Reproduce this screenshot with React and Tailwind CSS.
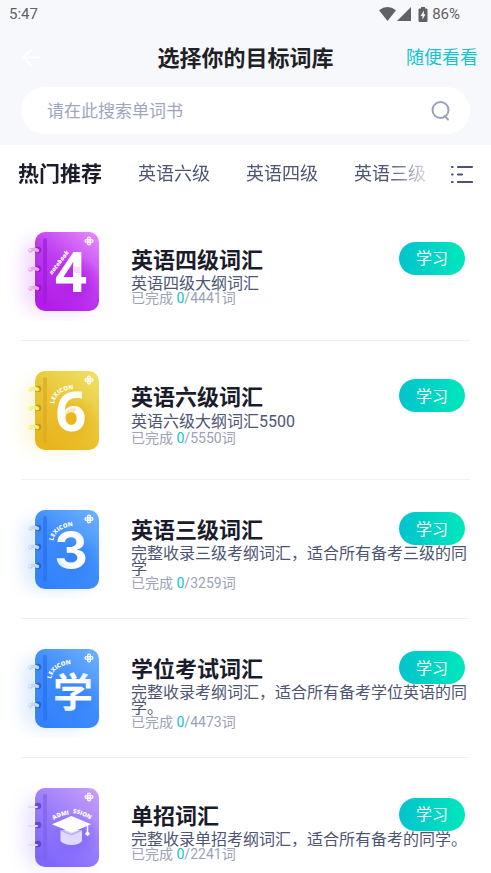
import React from "react";

const TABS = ["热门推荐", "英语六级", "英语四级", "英语三级"];

const BOOKS = [
  {
    id: "cet4",
    title: "英语四级词汇",
    desc: "英语四级大纲词汇",
    total: 4441,
    cover: { from: "#e88ffd", mid: "#bd3bee", to: "#b31be8", spine: "#9c1ddb", ring: "#eda6f8", hole: "#8f14c9", glow: "#c04cf5" },
  },
  {
    id: "cet6",
    title: "英语六级词汇",
    desc: "英语六级大纲词汇5500",
    total: 5550,
    mixed: true,
    cover: { from: "#f0e26a", mid: "#e9c637", to: "#e9b41c", spine: "#dcab22", ring: "#f6f07e", hole: "#b98a14", glow: "#f0d850" },
  },
  {
    id: "level3",
    title: "英语三级词汇",
    desc: "完整收录三级考纲词汇，适合所有备考三级的同学",
    total: 3259,
    cover: { from: "#6fb2fd", mid: "#3f8dfb", to: "#3482fb", spine: "#2a6ff0", ring: "#c0d9fa", hole: "#1c57c4", glow: "#5a9bff" },
  },
  {
    id: "degree",
    title: "学位考试词汇",
    desc: "完整收录考纲词汇，适合所有备考学位英语的同学。",
    total: 4473,
    cover: { from: "#6fb2fd", mid: "#3f8dfb", to: "#3482fb", spine: "#2a6ff0", ring: "#c0d9fa", hole: "#1c57c4", glow: "#5a9bff" },
  },
  {
    id: "admission",
    title: "单招词汇",
    desc: "完整收录单招考纲词汇，适合所有备考的同学。",
    total: 2241,
    thinRings: true,
    cover: { from: "#c9a0fb", mid: "#9a7dfc", to: "#7f66fb", spine: "#7d62ee", ring: "#e4daff", hole: "#5038b8", glow: "#a384ff" },
  },
];

function CoverArt({ id }) {
  const fill = `url(#${id}-glyph)`;
  if (id === "cet4") {
    return (
      <>
        <path id="cet4-line" d="M44 54L64 28" fill="none" />
        <text className="font-['Open_Sans'] text-[6px] font-extrabold italic" fill="#fff">
          <textPath href="#cet4-line">notebook</textPath>
        </text>
        <text x="63" y="71" textAnchor="middle" className="font-['Open_Sans'] text-[56px] font-bold" fill="#fff">4</text>
        <path d="M66 46h6v6h-6z" fill="#b31be8" opacity=".15" />
      </>
    );
  }
  if (id === "cet6") {
    return (
      <>
        <path id="cet6-arc" d="M46 44Q48 30 67 29" fill="none" />
        <text className="font-['Open_Sans'] text-[6px] font-extrabold" fill="#fff">
          <textPath href="#cet6-arc">LEXICON</textPath>
        </text>
        <text x="63" y="71" textAnchor="middle" className="font-['Open_Sans'] text-[54px] font-bold" fill="#fff">6</text>
        <path d="M57 53Q62 46 69 49L66 53Q60 52 58 60z" fill="#e9b41c" opacity=".3" />
      </>
    );
  }
  if (id === "level3") {
    return (
      <>
        <path id="level3-arc" d="M45 42Q48 28 67 27" fill="none" />
        <text className="font-['Open_Sans'] text-[6px] font-extrabold" fill="#fff">
          <textPath href="#level3-arc">LEXICON</textPath>
        </text>
        <text x="63" y="70" textAnchor="middle" className="font-['Inter'] text-[52px] font-bold" fill={fill}>3</text>
      </>
    );
  }
  if (id === "degree") {
    return (
      <>
        <path id="degree-arc" d="M43 41Q46 27 65 26" fill="none" />
        <text className="font-['Open_Sans'] text-[6px] font-extrabold" fill="#fff">
          <textPath href="#degree-arc">LEXICON</textPath>
        </text>
        <text x="65" y="69" textAnchor="middle" className="font-['Noto_Sans_CJK_SC'] text-[40px] font-bold" fill={fill}>学</text>
      </>
    );
  }
  return (
    <>
      <path id="admission-left" d="M46 43Q52 38 66 37" fill="none" />
      <path id="admission-right" d="M65 36Q74 37 86 45" fill="none" />
      <text className="font-['Open_Sans'] text-[6px] font-extrabold" fill="#fff">
        <textPath href="#admission-left">ADMI</textPath>
      </text>
      <text className="font-['Open_Sans'] text-[6px] font-extrabold" fill="#fff">
        <textPath href="#admission-right">SSION</textPath>
      </text>
      <path d="M52.500 53V64Q56 68 63.500 68Q71 68 74 64V53z" fill="#fff" opacity=".75" />
      <path d="M52.500 52L63.500 57L74 52V54L63.500 58.500L52.500 54z" fill="#7f66fb" opacity=".4" />
      <path d="M44 47.300L63.500 39L83 47.300L63.500 55.500z" fill="#fff" />
      <path d="M79.500 48.500V54.500" stroke="#fff" strokeWidth="1.500" />
      <path d="M79.500 53.500L82 57L79.500 59L77 57z" fill="#fff" />
    </>
  );
}

function BookCover({ id, cover, thinRings }) {
  return (
    <svg width="100" height="100" viewBox="0 0 100 100" aria-hidden="true" className="-ml-[13px] shrink-0">
      <defs>
        <linearGradient id={`${id}-cover`} x1="1" y1="0" x2=".3" y2="1">
          <stop offset="0" stopColor={cover.from} />
          <stop offset=".55" stopColor={cover.mid} />
          <stop offset="1" stopColor={cover.to} />
        </linearGradient>
        <linearGradient id={`${id}-glyph`} x1="1" y1="0" x2=".2" y2="1">
          <stop offset="0" stopColor="#fff" stopOpacity=".55" />
          <stop offset=".35" stopColor="#fff" />
          <stop offset=".7" stopColor="#fff" />
          <stop offset="1" stopColor="#fff" stopOpacity=".65" />
        </linearGradient>
        <radialGradient id={`${id}-shade`}>
          <stop offset="0" stopColor={cover.to} />
          <stop offset="1" stopColor={cover.to} stopOpacity="0" />
        </radialGradient>
        <filter id={`${id}-blur`} x="-50%" y="-50%" width="200%" height="200%">
          <feGaussianBlur stdDeviation="9" />
        </filter>
      </defs>
      <rect x="16" y="20" width="66" height="70" rx="14" fill={cover.glow} opacity=".22" filter={`url(#${id}-blur)`} />
      <rect x="26" y="12" width="64" height="77" rx="10" fill="#fff" opacity=".7" />
      <rect x="27" y="11" width="64" height="79" rx="10" fill={`url(#${id}-cover)`} />
      <circle cx="66" cy="60" r="26" fill={`url(#${id}-shade)`} />
      <rect x="35" y="17" width="4" height="66" rx="2" fill={cover.spine} opacity=".7" />
      {[29, 48, 67].map((y) => (
        <g key={y}>
          <circle cx="30" cy={y} r="3.300" fill={cover.hole} opacity=".7" />
          {thinRings ? (
            <path d={`M21 ${y + 1}H29`} stroke={cover.ring} strokeWidth="1.800" strokeLinecap="round" />
          ) : (
            <>
              <path d={`M22.500 ${y + 0.5}Q26 ${y - 2} 29.500 ${y + 0.5}`} stroke={cover.ring} strokeWidth="3.400" strokeLinecap="round" fill="none" />
              <circle cx="22.500" cy={y + 0.5} r="2.300" fill={cover.ring} />
              <circle cx="22" cy={y} r="1.200" fill="#fff" opacity=".5" />
            </>
          )}
        </g>
      ))}
      <g fill="none" stroke="#fff" strokeWidth="1.300">
        <circle cx="81" cy="17.600" r="1.400" />
        <circle cx="81" cy="22.400" r="1.400" />
        <circle cx="78.500" cy="20" r="1.400" />
        <circle cx="83.500" cy="20" r="1.400" />
      </g>
      <CoverArt id={id} />
    </svg>
  );
}

function StatusBar() {
  return (
    <div className="flex h-7 items-center justify-between pr-[31px] pl-[9px] text-[#5f6164]">
      <span className="text-[15px] leading-5">5:47</span>
      <div className="flex items-center">
        <svg width="17" height="14" viewBox="0 0 17 14" fill="currentColor" aria-hidden="true">
          <path d="M0 3.300Q8.500-3.300 17 3.300L8.500 14z" />
        </svg>
        <svg width="14" height="14" viewBox="0 0 14 14" fill="currentColor" className="ml-px" aria-hidden="true">
          <path d="M14 0V14H0z" />
        </svg>
        <svg width="10" height="15" viewBox="0 0 10 15" className="ml-[7px]" aria-hidden="true">
          <path d="M3 0h4v1.500h1.500q1 0 1 1V14q0 1-1 1h-7q-1 0-1-1V2.500q0-1 1-1H3z" fill="currentColor" />
          <path d="M5.800 3.500L2.500 9h2v3.500L7.500 7.300H5.800z" fill="#fff" />
        </svg>
        <span className="ml-1 text-[15px] leading-5">86%</span>
      </div>
    </div>
  );
}

function BookRow({ book }) {
  return (
    <li className="flex h-[139px] items-center gap-[23px] border-b border-[#f1f1f3]">
      <BookCover id={book.id} cover={book.cover} thinRings={book.thinRings} />
      <div className="min-w-0 flex-1 pt-2">
        <div className="flex h-[31px] items-end justify-between pr-[5px]">
          <h2 className="text-[22px] leading-[31px] font-bold text-[#1b1c2b]">{book.title}</h2>
          <button type="button" className="mb-px h-[33px] w-[66px] shrink-0 rounded-full bg-linear-to-r from-[#04c3cd] to-[#00e7bb] pt-0.5 text-base leading-5 text-white">
            学习
          </button>
        </div>
        <p className={`text-base text-[#4d5574] ${book.mixed ? "leading-[18px]" : "leading-[15px]"}`}>{book.desc}</p>
        <p className="text-sm leading-[15px] text-[#9ca2b9]">
          已完成 <span className="text-[#0fc4cc]">0</span>/{book.total}词
        </p>
      </div>
    </li>
  );
}

export default function App() {
  return (
    <div className="flex h-screen flex-col overflow-hidden bg-white font-['Roboto','Noto_Sans_CJK_SC',sans-serif]">
      <header className="shrink-0 bg-[#f7f8fc] pb-[11px]">
        <StatusBar />
        <div className="grid h-[59px] grid-cols-[1fr_auto_1fr] items-center">
          <div className="flex pl-[21px]">
            <button type="button" aria-label="返回" className="text-white">
              <svg width="20" height="20" viewBox="0 0 20 20" fill="none" stroke="currentColor" strokeWidth="2.200" strokeLinecap="round" strokeLinejoin="round" aria-hidden="true">
                <path d="M18 9.500H2M10 2L2 9.500L10 17" />
              </svg>
            </button>
          </div>
          <h1 className="pt-0.5 text-[22px] leading-8 font-bold text-[#202124]">选择你的目标词库</h1>
          <div className="flex justify-end pr-[13px]">
            <a href="#browse" className="text-lg leading-7 text-[#14c4ce]">随便看看</a>
          </div>
        </div>
        <form className="mx-[21px] flex h-[47px] items-center rounded-full bg-white pr-[19px] pl-[26px]">
          <input
            type="search"
            aria-label="搜索单词书"
            placeholder="请在此搜索单词书"
            className="h-full min-w-0 flex-1 bg-transparent text-[17px] text-[#4d5574] outline-none placeholder:text-[#9ea5c0]"
          />
          <button type="submit" aria-label="搜索" className="text-[#9aa1bd]">
            <svg width="20" height="22" viewBox="0 0 20 22" fill="none" stroke="currentColor" strokeWidth="2" strokeLinecap="round" aria-hidden="true">
              <circle cx="9.500" cy="10" r="8" />
              <path d="M13.500 16L17 19.500" />
            </svg>
          </button>
        </form>
      </header>

      <nav className="flex h-[57px] shrink-0 items-center pr-[17px] pl-[18px]">
        <div className="flex min-w-0 flex-1 items-center gap-9 overflow-hidden whitespace-nowrap [mask-image:linear-gradient(to_right,#000_calc(100%-48px),transparent)]">
          {TABS.map((tab, i) => (
            <button
              key={tab}
              type="button"
              className={i === 0 ? "shrink-0 text-[21px] leading-8 font-bold text-[#1b1c2b]" : "shrink-0 text-lg leading-7 text-[#4d5574]"}
            >
              {tab}
            </button>
          ))}
        </div>
        <button type="button" aria-label="全部分类" className="ml-3.5 shrink-0 text-[#4a5274]">
          <svg width="24" height="18" viewBox="0 0 24 18" fill="none" stroke="currentColor" strokeWidth="2.200" strokeLinecap="round" aria-hidden="true">
            <path d="M2 2h.6M2 9.500h.6M2 17h.6M8 2h14M8 9.500h4M8 17h14" />
          </svg>
        </button>
      </nav>

      <main className="min-h-0 flex-1 overflow-y-auto px-[21px] [scrollbar-width:none]">
        <ul>
          {BOOKS.map((book) => (
            <BookRow key={book.id} book={book} />
          ))}
        </ul>
      </main>
    </div>
  );
}
